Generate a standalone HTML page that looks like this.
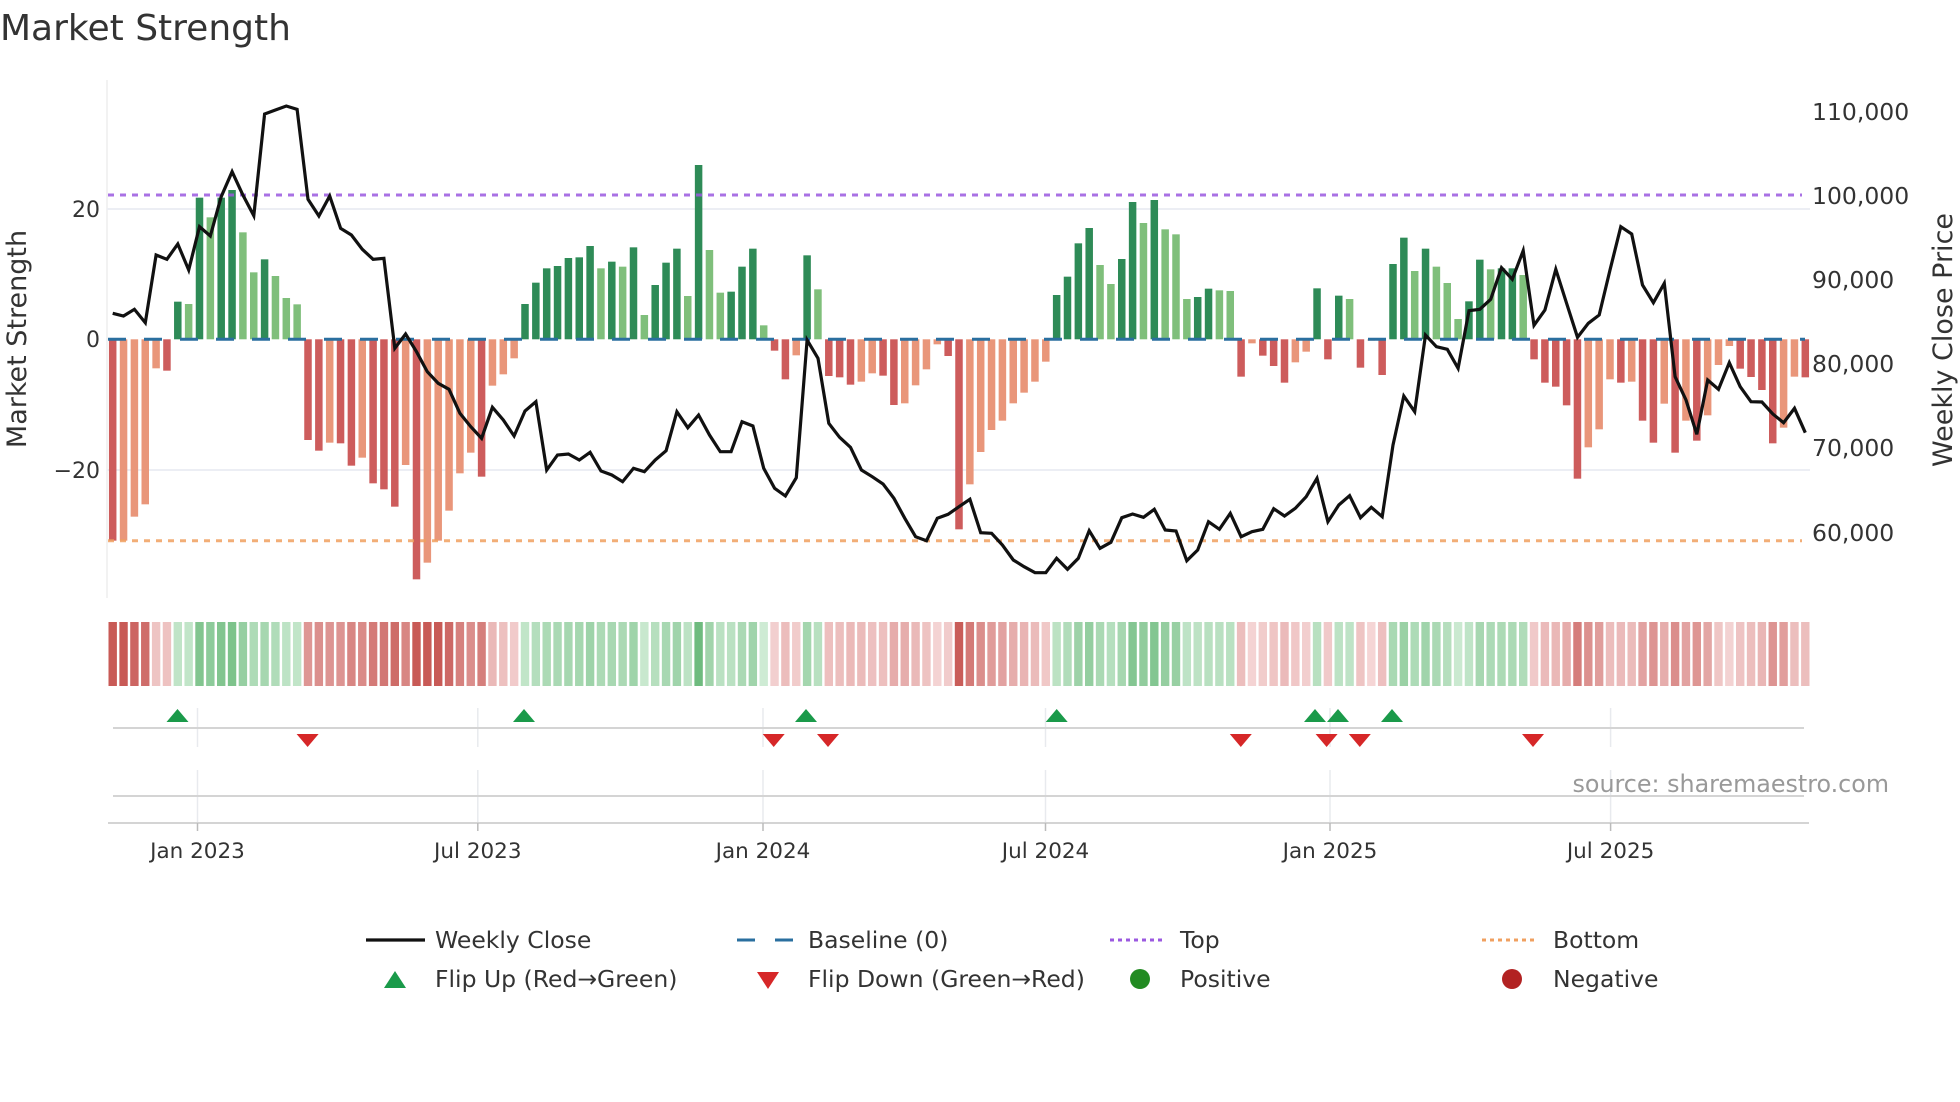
<!DOCTYPE html>
<html><head><meta charset="utf-8">
<style>
html,body{margin:0;padding:0;background:#fff;}
body{width:1960px;height:1102px;overflow:hidden;position:relative;font-family:"DejaVu Sans","Liberation Sans",sans-serif;color:#333;}
svg{position:absolute;left:0;top:0;}
svg text{font-family:"DejaVu Sans","Liberation Sans",sans-serif;}
</style></head>
<body>
<svg id="s" width="1960" height="1102" viewBox="0 0 1960 1102" xmlns="http://www.w3.org/2000/svg">
<text x="0" y="40" font-size="36" fill="#333">Market Strength</text>
<line x1="107" y1="80" x2="107" y2="598" stroke="#eee" stroke-width="1.5"/>
<line x1="107" y1="209" x2="1810" y2="209" stroke="#eceef4" stroke-width="2"/>
<line x1="107" y1="470" x2="1810" y2="470" stroke="#eceef4" stroke-width="2"/>
<g id="bars"></g>
<g id="base"></g>
<line x1="108" y1="195" x2="1802" y2="195" stroke="#9b59e0" stroke-width="3" stroke-dasharray="6 6" opacity="0.85"/>
<line x1="108" y1="540.7" x2="1802" y2="540.7" stroke="#f0a060" stroke-width="3" stroke-dasharray="6 6" opacity="0.85"/>
<polyline id="price" fill="none" stroke="#111" stroke-width="3.2" stroke-linejoin="miter"/>
<g font-size="22" fill="#333" text-anchor="end">
<text x="100" y="217">20</text>
<text x="100" y="347">0</text>
<text x="100" y="478">−20</text>
</g>
<text transform="translate(26,339) rotate(-90)" font-size="27" fill="#333" text-anchor="middle">Market Strength</text>
<g font-size="23.5" fill="#333">
<text x="1812" y="120">110,000</text>
<text x="1812" y="204">100,000</text>
<text x="1812" y="288">90,000</text>
<text x="1812" y="372">80,000</text>
<text x="1812" y="456">70,000</text>
<text x="1812" y="541">60,000</text>
</g>
<text transform="translate(1952,340) rotate(-90)" font-size="27" fill="#333" text-anchor="middle">Weekly Close Price</text>
<g id="cells"></g>
<g stroke="#e8eaee" stroke-width="1.5">
<line x1="197.5" y1="708" x2="197.5" y2="747"/><line x1="477.8" y1="708" x2="477.8" y2="747"/><line x1="763" y1="708" x2="763" y2="747"/><line x1="1045.5" y1="708" x2="1045.5" y2="747"/><line x1="1330" y1="708" x2="1330" y2="747"/><line x1="1610.6" y1="708" x2="1610.6" y2="747"/>
<line x1="197.5" y1="770" x2="197.5" y2="823"/><line x1="477.8" y1="770" x2="477.8" y2="823"/><line x1="763" y1="770" x2="763" y2="823"/><line x1="1045.5" y1="770" x2="1045.5" y2="823"/><line x1="1330" y1="770" x2="1330" y2="823"/><line x1="1610.6" y1="770" x2="1610.6" y2="823"/>
</g>
<line x1="113" y1="728" x2="1804" y2="728" stroke="#d4d4d4" stroke-width="2"/>
<line x1="113" y1="796" x2="1804" y2="796" stroke="#d4d4d4" stroke-width="2"/>
<line x1="108" y1="823" x2="1809" y2="823" stroke="#d4d4d4" stroke-width="2"/>
<g stroke="#bbb" stroke-width="1.5">
<line x1="197.5" y1="823" x2="197.5" y2="831"/><line x1="477.8" y1="823" x2="477.8" y2="831"/><line x1="763" y1="823" x2="763" y2="831"/><line x1="1045.5" y1="823" x2="1045.5" y2="831"/><line x1="1330" y1="823" x2="1330" y2="831"/><line x1="1610.6" y1="823" x2="1610.6" y2="831"/>
</g>
<g id="mk"></g>
<text x="1889" y="792" font-size="23.8" fill="#999" text-anchor="end">source: sharemaestro.com</text>
<g font-size="21.5" fill="#333" text-anchor="middle">
<text x="197.5" y="858">Jan 2023</text>
<text x="477.8" y="858">Jul 2023</text>
<text x="763" y="858">Jan 2024</text>
<text x="1045.5" y="858">Jul 2024</text>
<text x="1330" y="858">Jan 2025</text>
<text x="1610.6" y="858">Jul 2025</text>
</g>
<g font-size="23.5" fill="#333">
<line x1="366" y1="940" x2="425" y2="940" stroke="#111" stroke-width="3.2"/>
<text x="435" y="948">Weekly Close</text>
<line x1="737" y1="940" x2="755" y2="940" stroke="#2a6f9f" stroke-width="3"/>
<line x1="775" y1="940" x2="793" y2="940" stroke="#2a6f9f" stroke-width="3"/>
<text x="808" y="948">Baseline (0)</text>
<line x1="1110" y1="940" x2="1165" y2="940" stroke="#9b59e0" stroke-width="3" stroke-dasharray="4 4"/>
<text x="1180" y="948">Top</text>
<line x1="1482" y1="940" x2="1538" y2="940" stroke="#f0a060" stroke-width="3" stroke-dasharray="4 4"/>
<text x="1553" y="948">Bottom</text>
<polygon points="395,971 384,988 406,988" fill="#1a9a4a"/>
<text x="435" y="987">Flip Up (Red→Green)</text>
<polygon points="757,972 779,972 768,989" fill="#d62728"/>
<text x="808" y="987">Flip Down (Green→Red)</text>
<circle cx="1140" cy="979" r="10" fill="#228b22"/>
<text x="1180" y="987">Positive</text>
<circle cx="1512" cy="979" r="10" fill="#b22222"/>
<text x="1553" y="987">Negative</text>
</g>
</svg>
<script>
var B=[[1322,'D'],[1322,'L'],[1250,'L'],[1213,'L'],[805,'L'],[812,'D'],[605,'D'],[612,'L'],[293,'D'],[352,'L'],[293,'D'],[270,'D'],[397,'L'],[517,'L'],[478,'D'],[528,'L'],[594,'L'],[613,'L'],[1020,'D'],[1052,'D'],[1028,'L'],[1030,'D'],[1097,'D'],[1073,'L'],[1150,'D'],[1168,'D'],[1220,'D'],[1095,'L'],[1438,'D'],[1388,'L'],[1322,'L'],[1232,'L'],[1120,'L'],[1058,'L'],[1130,'D'],[857,'L'],[823,'L'],[775,'L'],[612,'D'],[548,'D'],[505,'D'],[498,'D'],[474,'D'],[472,'D'],[438,'D'],[505,'L'],[485,'D'],[500,'L'],[442,'D'],[645,'L'],[555,'D'],[488,'D'],[446,'D'],[588,'L'],[195,'D'],[450,'L'],[578,'L'],[575,'D'],[500,'D'],[446,'D'],[676,'L'],[752,'D'],[838,'D'],[766,'L'],[466,'D'],[568,'L'],[828,'D'],[832,'D'],[854,'D'],[845,'L'],[820,'L'],[827,'D'],[915,'D'],[910,'L'],[856,'L'],[808,'L'],[733,'L'],[768,'D'],[1288,'D'],[1153,'L'],[1056,'L'],[990,'L'],[962,'L'],[910,'L'],[878,'L'],[845,'L'],[785,'L'],[585,'D'],[530,'D'],[430,'D'],[384,'D'],[495,'L'],[552,'L'],[477,'D'],[306,'D'],[369,'L'],[300,'D'],[388,'L'],[403,'L'],[597,'L'],[591,'D'],[566,'D'],[571,'L'],[573,'L'],[830,'D'],[730,'L'],[767,'D'],[798,'D'],[848,'D'],[787,'L'],[755,'L'],[565,'D'],[778,'D'],[587,'D'],[597,'L'],[803,'D'],[722,'L'],[825,'D'],[492,'D'],[413,'D'],[513,'L'],[446,'D'],[500,'L'],[549,'L'],[657,'L'],[604,'D'],[479,'D'],[508,'L'],[505,'D'],[505,'D'],[525,'L'],[778,'D'],[848,'D'],[860,'D'],[916,'D'],[1136,'D'],[1042,'L'],[988,'L'],[838,'L'],[848,'D'],[845,'L'],[962,'D'],[1028,'D'],[911,'L'],[1058,'D'],[962,'L'],[1022,'D'],[946,'L'],[795,'L'],[738,'L'],[806,'D'],[831,'D'],[870,'D'],[1030,'D'],[983,'L'],[830,'L'],[832,'D']];
var P=[640,648,628,668,465,478,432,510,380,408,290,215,285,347,42,30,18,28,298,348,288,385,405,448,478,475,745,702,755,815,850,868,940,980,1015,922,960,1008,933,905,1110,
1065,1062,1080,1057,1113,1125,1145,1105,1115,1080,1052,935,983,945,1005,1055,1055,965,978,1105,1165,1188,1133,720,775,970,1012,1042,1110,1130,1152,1195,1255,1310,1322,1255,1243,1220,1198,1298,1300,
1335,1380,1400,1418,1418,1375,1408,1375,1292,1345,1327,1253,1242,1252,1228,1290,1293,1382,1350,1265,1288,1240,1310,1295,1288,1226,1248,1225,1190,1135,1265,1215,1187,1253,1222,1250,1035,888,935,705,
740,748,805,632,628,598,503,538,452,676,630,508,610,712,670,645,510,380,402,555,608,550,830,900,1003,840,868,788,860,905,906,942,968,925,998];
var NS="http://www.w3.org/2000/svg",Z=339.3;
function el(t,a,p){var e=document.createElementNS(NS,t);for(var k in a)e.setAttribute(k,a[k]);p.appendChild(e);return e;}
function X(i){return 112.7+i*10.85;}
var bg=document.getElementById('bars'),cg=document.getElementById('cells');
function mix(a,b,t){return 'rgb('+a.map(function(v,j){return Math.round(v+(b[j]-v)*t)}).join(',')+')';}
for(var i=0;i<B.length;i++){
 var y=100+B[i][0]/3,x=X(i),pos=y<Z,d=B[i][1]=='D';
 var col=pos?(d?'#2e8b57':'#7fbf7b'):(d?'#cd5c5c':'#e9967a');
 var y0=Math.min(y,Z),h=Math.abs(Z-y);
 if(h>0.5)el('rect',{x:x-3.75,y:y0,width:7.5,height:h,fill:col},bg);
 var v=h/6.5,t=Math.min(v/30,1);
 var c=pos?mix([214,239,219],[98,181,115],t):mix([245,214,214],[200,90,86],t);
 el('rect',{x:x-4.2,y:622,width:8.4,height:64,fill:c},cg);
}
var pts=[];for(var i=0;i<P.length;i++)pts.push(X(i).toFixed(1)+','+(100+P[i]/3).toFixed(1));
document.getElementById('price').setAttribute('points',pts.join(' '));
el('line',{x1:108,y1:Z,x2:1805,y2:Z,stroke:'#2a6f9f','stroke-width':3,'stroke-dasharray':'18 18'},document.getElementById('base'));
var mk=document.getElementById('mk');
[177.5,524,806,1056.7,1315,1338,1392].forEach(function(x){el('polygon',{points:x+',709 '+(x-11)+',722 '+(x+11)+',722',fill:'#1a9a4a'},mk);});
[307.6,773.7,828,1240.8,1326.6,1359.8,1533].forEach(function(x){el('polygon',{points:(x-11)+',734 '+(x+11)+',734 '+x+',747',fill:'#d62728'},mk);});
</script>
</body></html>
